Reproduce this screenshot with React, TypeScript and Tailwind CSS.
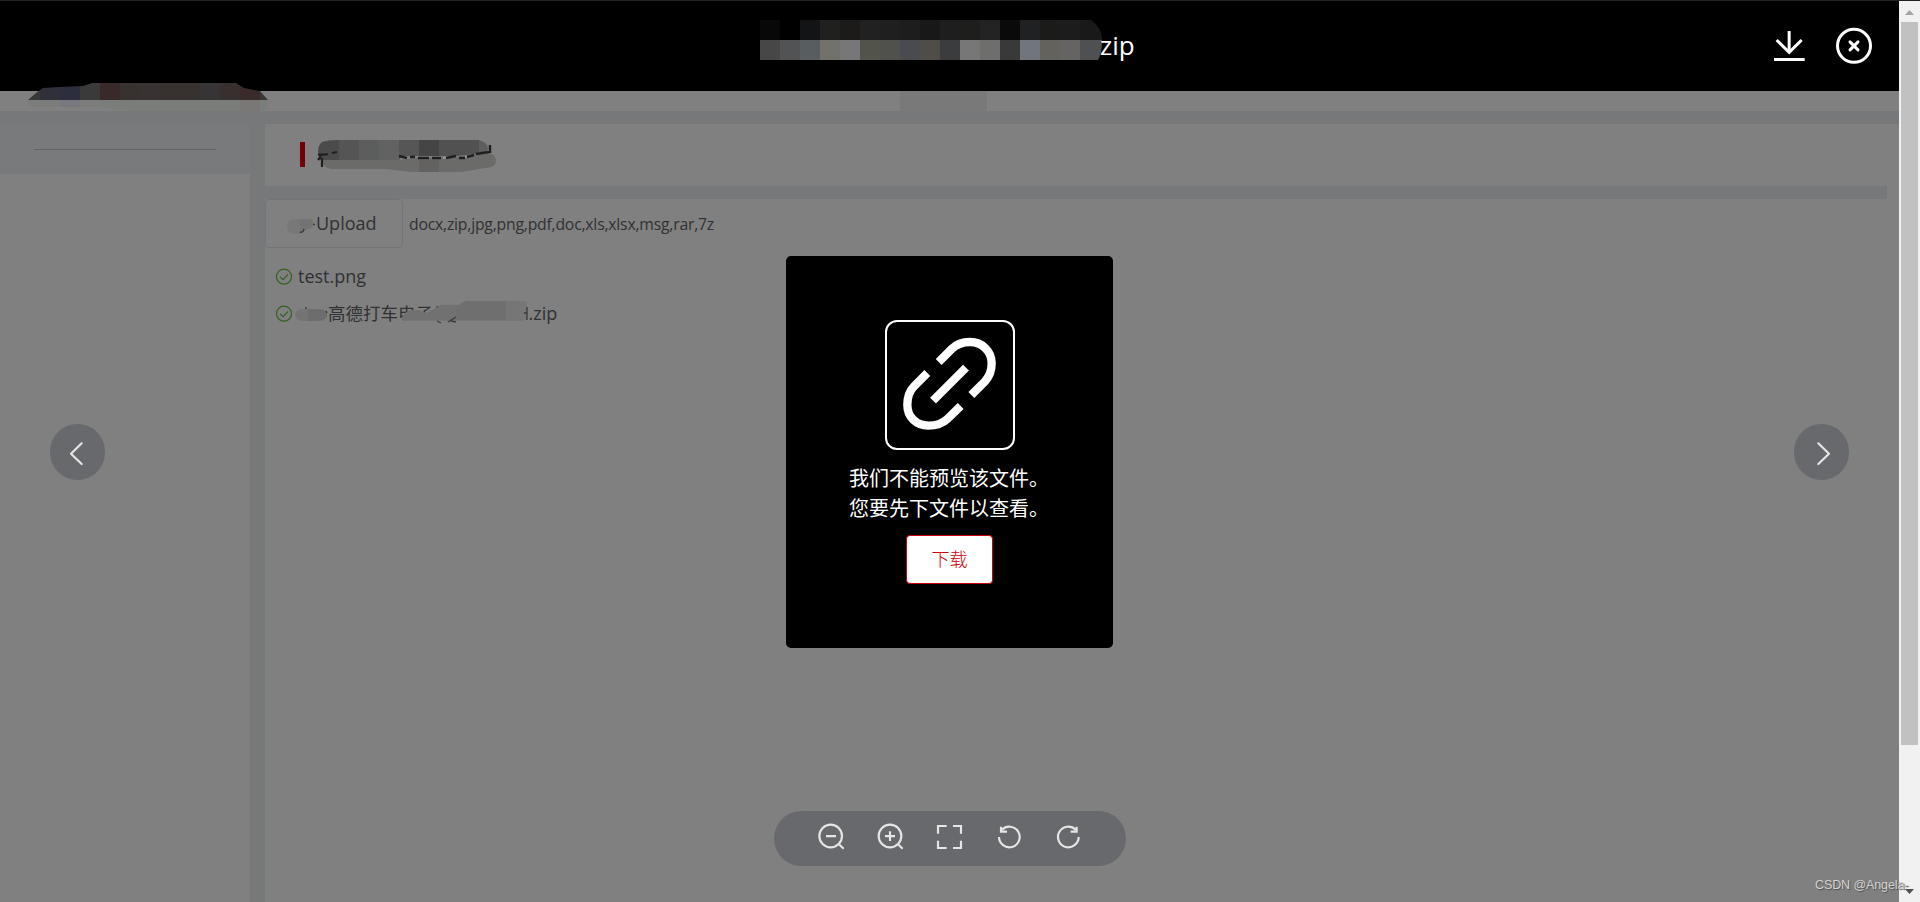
import React from "react";

const font = "font-['Open_Sans','Noto_Sans_CJK_SC',sans-serif]";

const titleTop = ["#080808", "#000000", "#121416", "#20201e", "#1d1b19", "#212121", "#1f1f1f", "#1d1d1d", "#181818", "#1e1e1e", "#1e1e1c", "#232323", "#0a0a0a", "#202123", "#1b1b19", "#1c1c1c", "#191919"];
const titleBottom = ["#474747", "#525355", "#585d5f", "#73716c", "#777777", "#52534b", "#50504c", "#4a4b4e", "#504d48", "#3b3c3e", "#777777", "#6e6e6c", "#393939", "#70767b", "#64625c", "#666462", "#4f5051"];

function TitleMask() {
  return (
    <svg className="h-10 w-[342px]" viewBox="0 0 342 40">
      <clipPath id="titleClip">
        <path d="M0 0H331C337 4 342 11 342 20C342 28 341 35 338 40H0Z" />
      </clipPath>
      <g clipPath="url(#titleClip)" shapeRendering="crispEdges">
        {titleTop.map((c, i) => <rect key={i} x={i * 20} y={0} width={24} height={20} fill={c} />)}
        {titleBottom.map((c, i) => <rect key={i} x={i * 20} y={20} width={24} height={20} fill={c} />)}
      </g>
    </svg>
  );
}

function LogoMask() {
  const cols = ["#383838", "#2f303a", "#2d2e3d", "#3a3a3a", "#3a2929", "#373130", "#383332", "#373130", "#373130", "#363434", "#382f2f", "#382b2a", "#383838"];
  return (
    <svg className="absolute left-7 top-[83px] h-[29px] w-60" viewBox="0 0 240 29">
      <clipPath id="logoClip">
        <path d="M0 17L8 10L15 5L32 4L55 3L64 0H208L216 5L232 8L240 17Z" />
      </clipPath>
      <path d="M0 17H240V24Q238 28 230 28H100L70 24H4L0 20Z" fill="#7b7d7b" />
      <rect x={32} y={17} width={20} height={7} fill="#777880" />
      <rect x={212} y={17} width={20} height={11} fill="#7a7776" />
      <g clipPath="url(#logoClip)" shapeRendering="crispEdges">
        {cols.map((c, i) => <rect key={i} x={i * 20 - 8} y={0} width={20} height={17} fill={c} />)}
      </g>
    </svg>
  );
}

function HeadingMask() {
  const cols = ["#4b4b4b", "#555555", "#5c5e5d", "#626262", "#565656", "#454545", "#515151", "#515151", "#5e5e5e"];
  return (
    <svg className="absolute -left-px -top-[9px] h-[34px] w-[182px]" viewBox="0 0 182 34">
      <clipPath id="headClip">
        <path d="M5 2Q10 0 20 0H162Q170 2 171 8Q172 13 158 14L140 16H85L82 20H3L1 14Q0 6 5 2Z" />
      </clipPath>
      <path d="M3 20H81L100 18L140 17L170 13Q179 14 179 20Q179 28 168 28L145 32H95L68 29H14Q6 28 5 20Z" fill="#6b6b69" />
      <path d="M102 20H122V32H102Z" fill="#636260" />
      <g clipPath="url(#headClip)" shapeRendering="crispEdges">
        {cols.map((c, i) => <rect key={i} x={i * 20 + 2} y={0} width={20} height={20} fill={c} />)}
        <rect x={0} y={0} width={2} height={20} fill="#5a5050" />
      </g>
      <path d="M1 14.500Q8 15 11 14M15 13L20 12M5 18V27M1 20L4 16" stroke="#202020" strokeWidth={2.2} fill="none" />
      <path d="M82 16L90 18M93 17H98M101 18H112M115 18H124M129 18L139 16M142 18H148M150 17L157 15M159 14L172 12M173 5V13" stroke="#202022" strokeWidth={2.4} fill="none" />
      <path d="M126 18H129M148 17H150" stroke="#98948b" strokeWidth={2} />
    </svg>
  );
}

function Check() {
  return (
    <svg className="size-[18px] shrink-0" viewBox="0 0 18 18" fill="none" stroke="#33611f" strokeWidth={1.2}>
      <circle cx={9} cy={8.7} r={7.5} />
      <path d="M5 8.900L8.100 11.700L13 6.300" />
    </svg>
  );
}

function Tool({ children }: { children: React.ReactNode }) {
  return (
    <svg className="size-7" viewBox="0 0 84 84" fill="none" stroke="#e6e6e7" strokeWidth={6.4}>
      {children}
    </svg>
  );
}

function PageContent() {
  return (
    <div className="flex h-[902px] w-[1899px] flex-col bg-[#77787a]">
      <div className="flex h-[111px] shrink-0 items-end bg-[#808080] pl-[900px]">
        <div className="h-5 w-[87px] bg-[#797979]" />
      </div>
      <div className="flex min-h-0 flex-1 pt-[13px]">
        <aside className="w-[250px] bg-[#808080]">
          <div className="h-[50px] bg-[#797a7c] px-[34px] pt-[25px]">
            <div className="h-px bg-[#636466]" />
          </div>
        </aside>
        <main className="ml-[15px] flex flex-1 flex-col bg-[#808080]">
          <div className="flex h-[62px] items-start pl-[35px] pt-[18px]">
            <div className="h-[25px] w-[5px] bg-[#730006]" />
            <div className="relative ml-[13px] mt-[7px] h-6 w-44">
              <HeadingMask />
            </div>
          </div>
          <div className="mr-3 h-[13px] bg-[#77787a]" />
          <div className="flex h-[49px] items-center">
            <div className="flex h-[49px] w-[138px] items-center rounded-[4px] border border-[#737476] pl-[21px]">
              <svg className="-mr-[2px] h-5 w-[31px]" viewBox="0 0 31 20">
                <path d="M7 5H23Q27 6 26 11Q25 16 17 16Q15 20 7 20Q0 19 0 12Q0 6 7 5Z" fill="#787878" />
                <path d="M13 5H23Q27 6 26 11Q25 16 13 16Z" fill="#737373" />
                <path d="M17 15Q16 19 13 18M26 10.500H28" stroke="#38393b" strokeWidth={1.4} fill="none" />
              </svg>
              <span className="-mt-px text-[18px] leading-6 text-[#303133]">Upload</span>
            </div>
            <span className="ml-[6px] whitespace-nowrap pt-px text-[15.75px] leading-6 tracking-[-0.21px] text-[#303133]">docx,zip,jpg,png,pdf,doc,xls,xlsx,msg,rar,7z</span>
          </div>
          <div className="mt-[10px] flex h-[37px] items-center pl-[10px] text-[18px] text-[#303133]">
            <Check />
            <span className="ml-[5px]">test.png</span>
          </div>
          <div className="flex h-[37px] items-center pl-[10px] text-[18px] text-[#303133]">
            <Check />
            <svg className="ml-[2px] h-4 w-[33px]" viewBox="0 0 33 16">
              <path d="M7 3H25Q33 4 32 10Q31 15 25 15H7Q0 14 0 9Q0 4 7 3Z" fill="#747474" />
              <path d="M13 3H25Q33 4 32 10Q31 15 13 15Z" fill="#6d6d6d" />
              <path d="M11 1V3M31 5L32 7" stroke="#303133" strokeWidth={1.2} />
            </svg>
            <span className="relative whitespace-nowrap text-[17.5px]">
              高德打车电子发
              <svg className="absolute -top-[1px] left-[74px] h-[34px] w-[126px]" viewBox="0 0 126 34">
                <path d="M0 19Q3 10 15 11L24 14L33 10Q38 5 47 6H57Q63 1 68 2H121Q125 2 125 5V20L120 22H52L50 34H34V22H6Q0 23 0 19Z" fill="#767676" />
                <path d="M0 19Q3 10 15 11L24 14L33 10Q38 5 54 6V21H6Q0 23 0 19Z" fill="#717171" />
                <path d="M54 6H57Q63 1 68 2H104V21H54Z" fill="#6f6f6f" />
                <path d="M0 22H124V34H0Z" fill="#808080" />
                <path d="M35 22L39 24M46 23L54 18M49 22L54 23M122 14H125M125 8V21" stroke="#38393b" strokeWidth={1.3} />
              </svg>
            </span>
            <span className="ml-[78px]">.zip</span>
          </div>
        </main>
      </div>
    </div>
  );
}

function Viewer() {
  return (
    <div className="absolute left-0 top-0 flex h-[902px] w-[1899px] flex-col">
      <header className="flex h-[91px] shrink-0 items-start border-t border-[#222222] bg-black pl-[760px]">
        <div className="flex w-[1010px] items-start pt-[19px]">
          <TitleMask />
          <span className="-ml-[2px] mt-[7px] text-[26px] leading-9 text-white">zip</span>
        </div>
        <svg className="mt-[25px] h-10 w-9" viewBox="0 0 108 120" fill="none" stroke="#fff" strokeWidth={9}>
          <path d="M12 100.500H104" />
          <path d="M57.500 15V80M20 42L57.500 79L95 42" />
        </svg>
        <svg className="ml-[28px] mt-[25px] size-10" viewBox="0 0 120 120" fill="none" stroke="#fff" strokeWidth={9}>
          <circle cx={60} cy={59.500} r={49.500} />
          <path d="M48 47.500L72 71.500M72 47.500L48 71.500" strokeLinecap="round" />
        </svg>
      </header>
      <div className="flex h-[720px] shrink-0 items-start justify-between pl-[50px] pr-[50px]">
        <button className="mt-[333px] h-[56px] w-[55px] rounded-full bg-[#68696c]">
          <svg className="size-[55px]" viewBox="0 0 165 165" fill="none" stroke="#e5e5e5" strokeWidth={6.5} strokeLinecap="round" strokeLinejoin="round">
            <path d="M95 55L63 86L95 117" />
          </svg>
        </button>
        <div className="mt-[165px] flex h-[392px] w-[327px] flex-col items-center rounded-[5px] bg-black pt-16">
          <svg className="h-[130px] w-[130px] shrink-0 rounded-xl border-2 border-white" viewBox="6 6 378 378" fill="none" stroke="#fff" strokeWidth={25}>
            <path d="M161 126L200 87C216 71 235 66 255 66C292 66 320 94 320 130C320 152 313 170 300 184L259 225" />
            <path d="M127 159L87 199C73 213 67 233 67 255C67 291 94 317 130 317C152 317 171 312 187 297L227 258" />
            <path d="M144 242L243 143" />
          </svg>
          <div className="mt-[14px] h-[60px] w-[201px] whitespace-nowrap text-[20px] leading-[30px] text-white">
            <p>我们不能预览该文件。</p>
            <p>您要先下文件以查看。</p>
          </div>
          <button className="mt-[11px] h-[49px] w-[87px] rounded-[4px] border border-[#c7000b] bg-white pb-[2px] text-[18px] font-light leading-6 text-[#c7000b]">下载</button>
        </div>
        <button className="mt-[333px] h-[56px] w-[55px] rounded-full bg-[#68696c]">
          <svg className="size-[55px]" viewBox="0 0 165 165" fill="none" stroke="#e5e5e5" strokeWidth={6.5} strokeLinecap="round" strokeLinejoin="round">
            <path d="M73 55L105 86L73 117" />
          </svg>
        </button>
      </div>
      <div className="ml-[774px] flex h-[55px] w-[352px] gap-[31px] rounded-full bg-[#68696c] pl-[43px] pt-[11px]">
        <Tool>
          <circle cx={41} cy={42} r={34} />
          <path d="M27 42.500H57M65 66L80 80" />
        </Tool>
        <Tool>
          <circle cx={42} cy={42} r={34} />
          <path d="M27 42.500H57M42 28V57M65 66L80 80" />
        </Tool>
        <Tool>
          <path d="M9 35V12H35M54 12H78V35M78 56V78H54M35 78H9V56" />
        </Tool>
        <Tool>
          <path d="M15 45A31 31 0 1 0 24 23M21 14V29H39" />
        </Tool>
        <Tool>
          <path d="M77 45A31 31 0 1 1 68 23M71 14V29H53" />
        </Tool>
      </div>
    </div>
  );
}

export default function App() {
  return (
    <div className={`relative flex h-[902px] w-[1920px] overflow-hidden ${font}`}>
      <PageContent />
      <Viewer />
      <LogoMask />
      <div className="flex w-[21px] flex-col items-center border-t border-[#222222] bg-[#f1f1f1]">
        <svg className="h-[21px] w-[21px] shrink-0" viewBox="0 0 21 21"><path d="M6 14L10.500 9L15 14Z" fill="#a3a3a3" /></svg>
        <div className="h-[723px] w-[17px] shrink-0 bg-[#c1c1c1]" />
        <div className="flex-1" />
        <svg className="h-[21px] w-[21px] shrink-0" viewBox="0 0 21 21"><path d="M6 8L10.500 13L15 8Z" fill="#505050" /></svg>
      </div>
      <div className="absolute left-[1815px] top-[876px] whitespace-nowrap font-['Liberation_Sans',sans-serif] text-[12.5px] leading-[18px] tracking-[-0.1px] text-[#d2d2d2] [text-shadow:1px_1px_1px_#505050]">CSDN @Angela-</div>
    </div>
  );
}
